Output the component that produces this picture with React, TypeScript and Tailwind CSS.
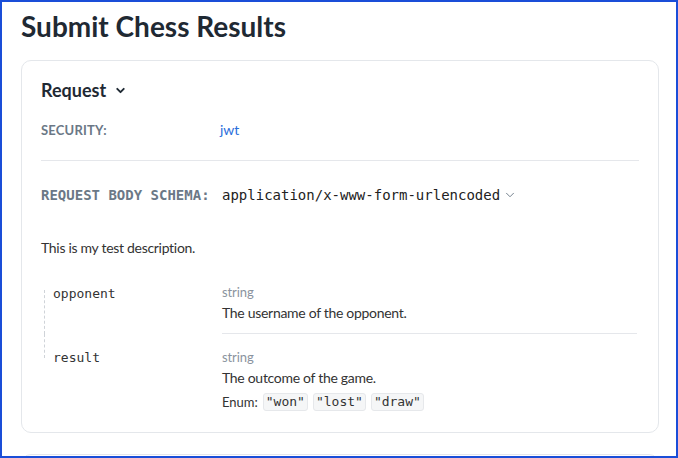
import React from 'react';

const sans = "font-['Lato','Liberation_Sans',sans-serif]";
const mono = "font-['DejaVu_Sans_Mono','Liberation_Mono',monospace]";

const Chevron = ({ className }: { className?: string }) => (
    <svg viewBox="0 0 24 24" className={className} fill="none" stroke="currentColor" strokeLinecap="round" strokeLinejoin="round">
        <path d="M6 9l6 6 6-6" />
    </svg>
);

const EnumChip = ({ value }: { value: string }) => (
    <span className={`${mono} inline-block rounded-[3px] border border-[#e6e8eb] bg-[#f5f6f7] px-[2px] text-[13px] leading-[16px] text-[#333]`}>
        "{value}"
    </span>
);

export default function App() {
    return (
        <div className={`${sans} h-[458px] overflow-hidden border-2 border-[#1a4ed8] bg-white pl-[19px] pr-[17px] text-[#333]`}>
            <h1 className="pt-[6px] pb-[16px] text-[28px] font-bold leading-[36px] text-[#1f2933]">Submit Chess Results</h1>

            <div className="rounded-[10px] border border-[#e4e7eb] px-[19px] pt-[16px] pb-[20px]">
                <div className="flex items-center gap-[8px] text-[18px] font-bold leading-[26px] text-[#1f2933]">
                    Request
                    <Chevron className="h-[13px] w-[13px] stroke-[3.5]" />
                </div>

                <div className="mt-[16px] flex items-center pb-[19px] border-b border-[#e5e7eb]">
                    <span className="w-[179px] text-[13px] font-bold uppercase leading-[22px] tracking-[0.2px] text-[#6b7886]">Security:</span>
                    <span className="text-[14px] leading-[22px] text-[#2a6edb]">jwt</span>
                </div>

                <div className={`${mono} mt-[23px] flex items-center text-[14px] leading-[22px]`}>
                    <span className="w-[181px] font-bold text-[#6b7886]">REQUEST BODY SCHEMA:</span>
                    <span className="text-[#222]">application/x-www-form-urlencoded</span>
                    <Chevron className="ml-[3px] h-[14px] w-[14px] stroke-[1.6] text-[#6b7886]" />
                </div>

                <p className="mt-[31px] text-[14px] leading-[22px] tracking-[-0.3px] text-[#333]">This is my test description.</p>

                <div className="mt-[23px] ml-[3px]">
                    <div className="flex">
                        <div className="flex w-[178px] shrink-0 flex-col pt-[8px]">
                            <div className="flex-1 border-l border-dashed border-[#cfd3d8] pl-[8px]">
                                <div className={`${mono} -mt-[5px] text-[13px] leading-[18px] text-[#333]`}>opponent</div>
                            </div>
                        </div>
                        <div className="mr-[2px] flex-1 border-b border-[#e5e7eb] pb-[9px]">
                            <div className="text-[13px] leading-[20px] tracking-[-0.1px] text-[#8a939e]">string</div>
                            <div className="text-[14px] leading-[22px] tracking-[-0.3px] text-[#333]">The username of the opponent.</div>
                        </div>
                    </div>
                    <div className="flex">
                        <div className="w-[178px] shrink-0">
                            <div className="h-[24px] border-l border-dashed border-[#cfd3d8]"></div>
                            <div className={`${mono} -mt-[9px] pl-[9px] text-[13px] leading-[18px] text-[#333]`}>result</div>
                        </div>
                        <div className="flex-1 pt-[13px]">
                            <div className="text-[13px] leading-[20px] tracking-[-0.1px] text-[#8a939e]">string</div>
                            <div className="text-[14px] leading-[22px] tracking-[-0.3px] text-[#333]">The outcome of the game.</div>
                            <div className="mt-[3px] flex items-center gap-[5px] text-[13px] leading-[20px] text-[#333]">
                                <span>Enum:</span>
                                <EnumChip value="won" />
                                <EnumChip value="lost" />
                                <EnumChip value="draw" />
                            </div>
                        </div>
                    </div>
                </div>
            </div>

            <div className="mt-[21px] h-[40px] rounded-t-[10px] border border-[#e4e7eb]"></div>
        </div>
    );
}
